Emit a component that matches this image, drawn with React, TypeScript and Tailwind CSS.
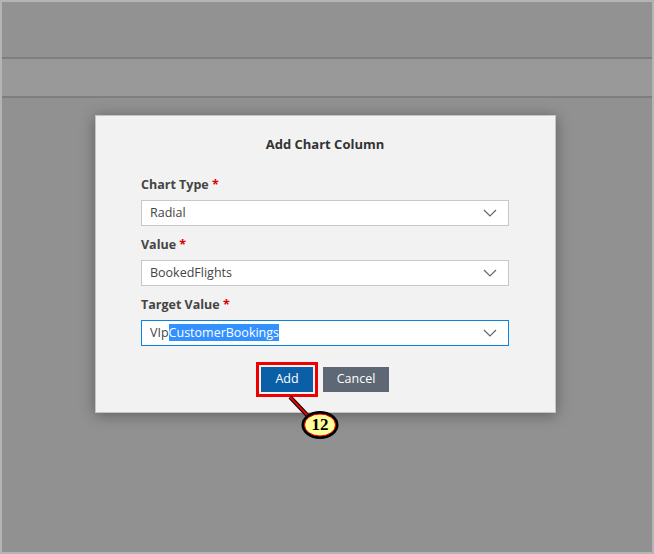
import React from 'react'

type FieldProps = {
  label: string
  active?: boolean
  children: React.ReactNode
}

function Chevron() {
  return (
    <svg width="14" height="8" viewBox="0 0 14 8" className="shrink-0">
      <path d="M1 1 L7 7 L13 1" fill="none" stroke="#666" strokeWidth="1.2" />
    </svg>
  )
}

function Field({ label, active, children }: FieldProps) {
  return (
    <div className="flex flex-col">
      <div className="h-[18px] text-[12.5px] leading-[18px] font-bold text-[#444]">
        {label} <span className="text-[#d00]">*</span>
      </div>
      <div
        className={
          active
            ? 'mt-[6px] flex h-[26px] items-center justify-between border border-[#0a84e3] bg-white pl-[8px] pr-[11px]'
            : 'mt-[6px] flex h-[26px] items-center justify-between border border-[#c8c8c8] bg-white pl-[8px] pr-[11px]'
        }
      >
        <div className="text-[12.5px] leading-[18px] text-[#444]">{children}</div>
        <Chevron />
      </div>
    </div>
  )
}

export default function App() {
  return (
    <div
      className="relative h-[554px] w-[654px] overflow-hidden border-2 border-[#b4b4b4] bg-[#919191]"
      style={{ fontFamily: '"Open Sans", "Noto Sans", sans-serif' }}
    >
      {/* page behind the modal */}
      <div className="h-[57px] border-b-2 border-[#7e7e7e] bg-[#929292]" />
      <div className="h-[39px] border-b-2 border-[#7e7e7e] bg-[#999999]" />

      {/* modal */}
      <div className="absolute left-[93px] top-[113px] w-[461px] border border-[#c4c4c4] bg-[#f2f2f2] pl-[45px] pr-[46px] pb-[20px] pt-[19px] shadow-[0_2px_14px_rgba(0,0,0,0.35)]">
        <div className="text-center text-[13px] leading-[18px] font-bold text-[#333]">Add Chart Column</div>

        <div className="mt-[23px] flex flex-col gap-[10px]">
          <Field label="Chart Type">Radial</Field>
          <Field label="Value">BookedFlights</Field>
          <Field label="Target Value" active>
            VIp<span className="bg-[#3390ff] text-white">CustomerBookings</span>
          </Field>
        </div>

        <div className="mt-[21px] flex items-start justify-center gap-[10px]">
          <div className="relative">
            <button className="block h-[25px] w-[52px] bg-[#0b5fa6] text-[12.5px] text-white">Add</button>
            <div className="absolute -inset-[5px] border-[3px] border-[#ee0000]" />
          </div>
          <button className="block h-[25px] w-[66px] bg-[#5d6874] text-[12.5px] text-white">Cancel</button>
        </div>
      </div>

      {/* step callout */}
      <svg className="absolute left-[284px] top-[392px]" width="60" height="50" viewBox="0 0 60 50">
        <line x1="4" y1="3" x2="22" y2="22" stroke="#000" strokeWidth="4" />
        <line x1="4" y1="3" x2="22" y2="22" stroke="#ee0000" strokeWidth="2" />
        <ellipse cx="34" cy="31" rx="17" ry="12.5" fill="#ffff99" stroke="#000" strokeWidth="3" />
        <ellipse cx="34" cy="31" rx="15.5" ry="11" fill="none" stroke="#ee0000" strokeWidth="1" />
      </svg>
      <div
        className="absolute left-[301px] top-[413px] w-[34px] text-center text-[17px] leading-[20px] font-bold text-black"
        style={{ fontFamily: '"Liberation Serif", serif' }}
      >
        12
      </div>
    </div>
  )
}
